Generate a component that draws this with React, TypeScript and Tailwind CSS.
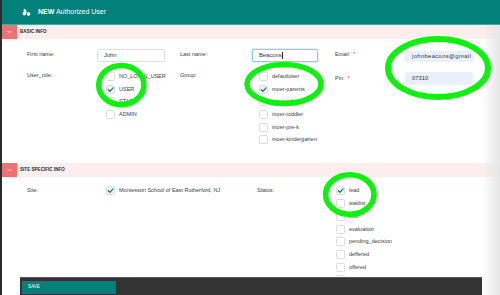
import React from "react";

function Check() {
  return (
    <svg width="7" height="7" viewBox="0 0 10 10" fill="none">
      <path d="M1.8 5.3 L4.2 7.6 L8.6 2.6" stroke="#0b7f7b" strokeWidth="1.8" strokeLinecap="round" strokeLinejoin="round" />
    </svg>
  );
}

function Box({ checked }: { checked?: boolean }) {
  return (
    <span
      className={
        checked
          ? "w-[9px] h-[9px] shrink-0 rounded-[1.5px] border border-[#dcdcdc] bg-[#f3f3f3] flex items-center justify-center"
          : "w-[9px] h-[9px] shrink-0 rounded-[1.5px] border border-[#dcdcdc] bg-white flex items-center justify-center"
      }
    >
      {checked && <Check />}
    </span>
  );
}

function Options({ items, checked }: { items: string[]; checked: string }) {
  return (
    <div className="flex flex-col gap-[3.7px]">
      {items.map((it) => (
        <div key={it} className="flex items-center gap-[4px] h-[9px]">
          <Box checked={it === checked} />
          <span className="text-[5.5px] leading-[7px] text-[#3c3c3c] whitespace-nowrap">{it}</span>
        </div>
      ))}
    </div>
  );
}

function SectionBar({ title }: { title: string }) {
  return (
    <div className="h-[14px] shrink-0 bg-[#fdeeee] flex items-center">
      <div className="w-[15px] h-full bg-[#f2706f] flex items-center justify-center">
        <svg width="5" height="4" viewBox="0 0 6 4" fill="none">
          <path d="M1 1 L3 3 L5 1" stroke="white" strokeWidth="1.2" strokeLinecap="round" strokeLinejoin="round" />
        </svg>
      </div>
      <span className="ml-[3px] text-[4.5px] font-bold text-[#2a2222] tracking-[0.05px]">{title}</span>
    </div>
  );
}

function Label({ children, req }: { children: React.ReactNode; req?: boolean }) {
  return (
    <div className="text-[5.5px] leading-[7px] text-[#3c3c3c] whitespace-nowrap">
      {children}
      {req && <span className="text-[#e0303a] ml-[3px]">*</span>}
    </div>
  );
}

function Logo() {
  return (
    <svg width="9" height="9" viewBox="0 0 10 10" fill="white">
      <path d="M2.4 0.8 C4.8 1.2 5.6 3.6 4.8 6 C4.1 8 2.4 8.8 1.2 7.8 C0.2 6.6 0.8 4.6 2.4 4 C1.4 3.2 1.6 1.8 2.4 0.8 Z" />
      <path d="M6.6 4.4 C8.4 4.2 9.6 5.6 9.2 7.2 C8.8 8.8 7 9.2 6 8.2 C5.2 7.2 5.4 5.2 6.6 4.4 Z" />
    </svg>
  );
}

export default function App() {
  const roles = ["NO_LOGIN_USER", "USER", "STAFF", "ADMIN"];
  const groups = ["defaultuser", "moer-parents", "moer-infant", "moer-toddler", "moer-pre-k", "moer-kindergarten"];
  const statuses = ["lead", "waitlist", "visit", "evaluation", "pending_decision", "deffered", "offered", "accepted", "enrolled"];

  return (
    <div className="relative w-[500px] h-[295px] overflow-hidden bg-white flex font-['Liberation_Sans',Arial,sans-serif] text-[#3c3c3c]">
      <div className="w-[2px] shrink-0 bg-[#2b2b2b]" />
      <div className="flex-1 flex flex-col min-w-0">
        <header className="h-[24px] shrink-0 bg-[#03807a] flex items-center pl-[20px] gap-[7px] text-white text-[7px]">
          <Logo />
          <span className="whitespace-nowrap">
            <b className="font-bold">NEW</b> Authorized User
          </span>
        </header>
        <div className="h-[1px] shrink-0 bg-[#4aa6a1]" />
        <SectionBar title="BASIC INFO" />

        <div className="pl-[25px] pt-[10px] pb-[18.5px] grid grid-cols-[70px_83px_72px_83px_70px_68px] gap-y-[10px] items-start">
          <div className="pt-[1.5px]"><Label>First name:</Label></div>
          <div className="w-[68px] h-[13px] rounded-[2px] border border-[#dedede] bg-white pl-[6px] flex items-center text-[5.8px] text-[#333]">John</div>
          <div className="pt-[1.5px]"><Label>Last name:</Label></div>
          <div className="w-[66px] h-[13px] rounded-[2px] border border-[#86d3ce] shadow-[0_0_0_0.5px_#b7e6e2] bg-white pl-[6px] flex items-center text-[5.8px] text-[#333]">
            Beacons<span className="w-[0.5px] h-[7px] bg-[#222] ml-[0.5px]" />
          </div>
          <div className="pt-[1.5px]"><Label req>Email:</Label></div>
          <div className="mt-[1.5px] w-[68px] h-[11.5px] rounded-[2px] bg-[#e8f0fe] pl-[7px] flex items-center whitespace-nowrap text-[5.8px] tracking-[0.38px] text-[#333]">johnbeacons@gmail</div>

          <Label>User_role:</Label>
          <div className="pl-[9px]"><Options items={roles} checked="USER" /></div>
          <Label>Group:</Label>
          <div className="pl-[7px]"><Options items={groups} checked="moer-parents" /></div>
          <div className="pt-[3px]"><Label req>Pin:</Label></div>
          <div className="w-[68px] h-[12.7px] rounded-[2px] bg-[#e8f0fe] pl-[7px] flex items-center text-[5.8px] text-[#333]">07310</div>
        </div>

        <SectionBar title="SITE SPECIFIC INFO" />
        <div className="pl-[25px] pt-[9.5px] grid grid-cols-[79px_151px_79px_1fr] items-start">
          <div className="pt-[1px]"><Label>Site:</Label></div>
          <div className="flex items-center gap-[4px] h-[9px]">
            <Box checked />
            <span className="text-[5.5px] leading-[7px] whitespace-nowrap">Montessori School of East Rutherford, NJ</span>
          </div>
          <div className="pt-[1px]"><Label>Status:</Label></div>
          <Options items={statuses} checked="lead" />
        </div>
      </div>

      {/* right edge shade */}
      <div className="absolute right-0 top-[25px] bottom-0 w-[18px] bg-linear-to-r from-[#ffffff00] to-[#e6e6e6]" />

      {/* footer bar */}
      <div className="absolute left-[20px] bottom-0 w-[462px] h-[18px] bg-[#333333] border-t border-[#555] pl-[2px] pt-[2.5px]">
        <div className="w-[94px] h-[13px] bg-[#03807a] flex items-center pl-[6px] text-white text-[4.5px]">SAVE</div>
      </div>

      {/* annotation ellipses */}
      <svg className="absolute inset-0 pointer-events-none" width="500" height="295" viewBox="0 0 500 295" fill="none">
        <ellipse cx="121.3" cy="85" rx="22.6" ry="19.6" stroke="#0cf20c" strokeWidth="5.5" />
        <ellipse cx="284" cy="84" rx="37" ry="19.5" stroke="#0cf20c" strokeWidth="5.5" />
        <ellipse cx="438" cy="68" rx="50" ry="29" stroke="#0cf20c" strokeWidth="6" />
        <ellipse cx="349.8" cy="194.5" rx="24.2" ry="19.8" stroke="#0cf20c" strokeWidth="5.5" />
      </svg>
    </div>
  );
}
